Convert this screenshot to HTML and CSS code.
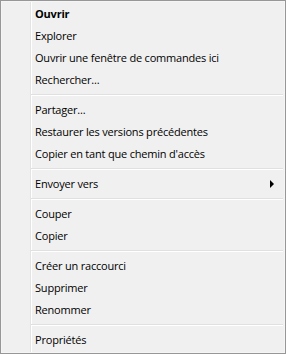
FILE: index.html
```html
<!doctype html>
<html lang="fr">
  <head>
    <meta charset="UTF-8" />
    <meta name="viewport" content="width=device-width, initial-scale=1.0" />
    <title>Menu contextuel</title>
    <link rel="stylesheet" href="styles.css">
  </head>
  <body>
    <div class="menu">
      <div class="item default">Ouvrir</div>
      <div class="item">Explorer</div>
      <div class="item">Ouvrir une fenêtre de commandes ici</div>
      <div class="item">Rechercher...</div>
      <div class="sep"></div>
      <div class="item">Partager...</div>
      <div class="item">Restaurer les versions précédentes</div>
      <div class="item">Copier en tant que chemin d'accès</div>
      <div class="sep"></div>
      <div class="item submenu">Envoyer vers</div>
      <div class="sep"></div>
      <div class="item">Couper</div>
      <div class="item">Copier</div>
      <div class="sep"></div>
      <div class="item">Créer un raccourci</div>
      <div class="item">Supprimer</div>
      <div class="item">Renommer</div>
      <div class="sep"></div>
      <div class="item">Propriétés</div>
    </div>
  </body>
</html>
```

FILE: styles.css
```css
* {
  margin: 0;
  padding: 0;
  box-sizing: border-box;
}

body {
  font-family: 'Open Sans', 'Noto Sans', sans-serif;
  font-size: 11px;
  letter-spacing: -0.2px;
  color: #000;
  background: #fff;
}

.menu {
  width: 286px;
  height: 354px;
  border: 1px solid #979797;
  padding: 2px;
  display: flex;
  flex-direction: column;
  background:
    linear-gradient(to right, transparent 29px, #e2e3e3 29px, #e2e3e3 30px, #fff 30px, #fff 31px, transparent 31px),
    #f0f0f0;
  box-shadow: inset 0 0 0 1px #f5f5f5;
}

.item {
  height: 22px;
  line-height: 22px;
  padding-left: 32px;
  white-space: nowrap;
  position: relative;
}

.default {
  font-weight: bold;
}

.submenu::after {
  content: '';
  position: absolute;
  right: 9px;
  top: 7px;
  border-left: 4px solid #000;
  border-top: 4px solid transparent;
  border-bottom: 4px solid transparent;
}

.sep {
  height: 8px;
  margin-left: 28px;
  padding-top: 3px;
}

.sep::before {
  content: '';
  display: block;
  height: 1px;
  background: #e0e0e0;
  border-bottom: 1px solid #fff;
  box-sizing: content-box;
}
```
